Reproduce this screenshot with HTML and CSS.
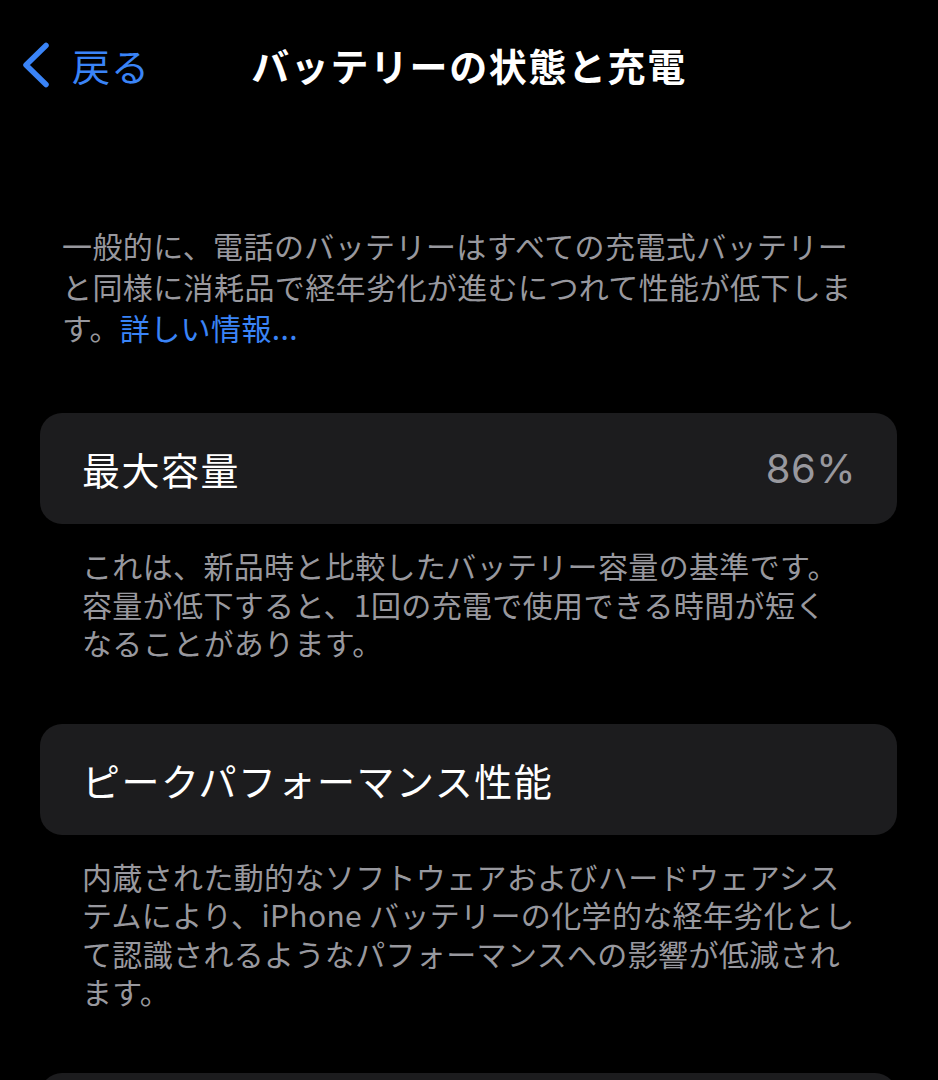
FILE: index.html
```html
<!DOCTYPE html>
<html lang="ja">
<head>
<meta charset="utf-8">
<title>バッテリーの状態と充電</title>
<link rel="stylesheet" href="styles.css">
</head>
<body>
<header class="nav">
  <a class="back" href="#">
    <svg class="chev" width="30" height="46" viewBox="0 0 30 46" aria-hidden="true">
      <polyline points="25,3.5 5,23 25,42.5" fill="none" stroke="currentColor" stroke-width="5.5" stroke-linecap="round" stroke-linejoin="round"/>
    </svg>
    <span>戻る</span>
  </a>
  <h1 class="title">バッテリーの状態と充電</h1>
  <div></div>
</header>

<p class="intro">一般的に、電話のバッテリーはすべての充電式バッテリー<br>と同様に消耗品で経年劣化が進むにつれて性能が低下しま<br>す。<a class="link" href="#">詳しい情報...</a></p>

<section class="card">
  <span class="label">最大容量</span>
  <span class="value">86%</span>
</section>
<p class="caption">これは、新品時と比較したバッテリー容量の基準です。<br>容量が低下すると、1回の充電で使用できる時間が短く<br>なることがあります。</p>

<section class="card">
  <span class="label">ピークパフォーマンス性能</span>
</section>
<p class="caption">内蔵された動的なソフトウェアおよびハードウェアシス<br>テムにより、iPhone バッテリーの化学的な経年劣化とし<br>て認識されるようなパフォーマンスへの影響が低減され<br>ます。</p>

<section class="card"></section>
</body>
</html>
```

FILE: styles.css
```css
html, body {
  margin: 0;
  padding: 0;
  background: #000;
}
body {
  font-family: "Noto Sans CJK JP", "Noto Sans", sans-serif;
  color: #fff;
  width: 938px;
  overflow: hidden;
}
.nav {
  height: 130px;
  display: grid;
  grid-template-columns: 1fr auto 1fr;
  align-items: center;
}
.back {
  display: flex;
  align-items: center;
  gap: 21px;
  padding-left: 21px;
  text-decoration: none;
  font-size: 38px;
  line-height: 46px;
  letter-spacing: 1px;
  color: #3a84f7;
}
.chev {
  display: block;
}
.title {
  margin: 0;
  font-size: 38px;
  font-weight: 700;
  letter-spacing: 1.6px;
  line-height: 46px;
  color: #fff;
}
.intro {
  margin: 95px 0 0 62px;
  font-size: 30px;
  line-height: 41px;
  letter-spacing: 0.4px;
  color: #98989e;
}
.link {
  color: #3a84f7;
  text-decoration: none;
}
.card {
  margin: 65px 41px 0 40px;
  height: 111px;
  border-radius: 22px;
  background: #1c1c1e;
  display: flex;
  align-items: center;
  justify-content: space-between;
  padding: 0 41px 0 42px;
}
.caption + .card {
  margin-top: 62px;
}
.label {
  font-size: 38px;
  letter-spacing: 1.5px;
  color: #fff;
}
.value {
  font-family: Inter, "Liberation Sans", sans-serif;
  font-size: 40px;
  letter-spacing: 0.5px;
  color: #98989e;
}
.caption {
  margin: 22px 0 0 82px;
  font-size: 30px;
  line-height: 38.5px;
  letter-spacing: 0.35px;
  color: #98989e;
}
```
